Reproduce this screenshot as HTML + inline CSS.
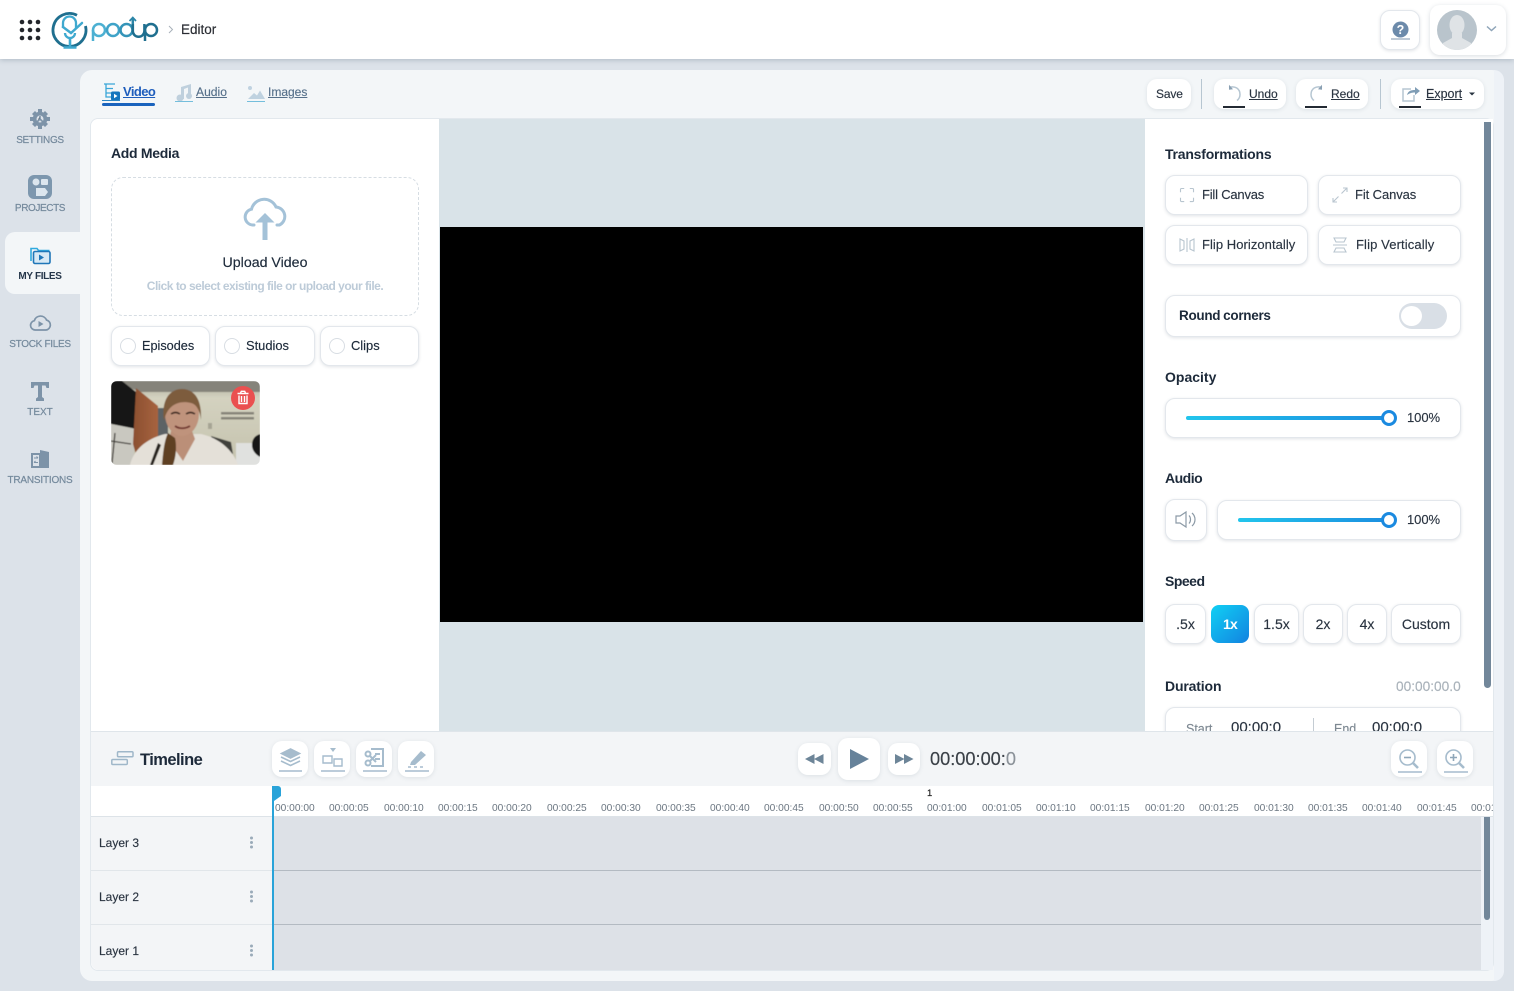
<!DOCTYPE html>
<html><head><meta charset="utf-8"><title>Podup Editor</title>
<style>
*{box-sizing:border-box}
html,body{margin:0;padding:0;width:1514px;height:991px;overflow:hidden;background:#dce2e9;font-family:"Liberation Sans",sans-serif;color:#1d2a3a}
.a{position:absolute}
.t{position:absolute;white-space:nowrap;line-height:16px;-webkit-text-stroke:.15px currentColor}
.btn{position:absolute;background:#fff;border:1px solid #e3e7ec;border-radius:10px;box-shadow:0 1px 3px rgba(60,80,100,.16)}
.sb{position:absolute;background:#fff;border-radius:10px;box-shadow:0 1px 4px rgba(60,80,100,.12)}
.side{position:absolute;left:0;width:80px;text-align:center;font-size:10px;color:#74899c;line-height:12px;-webkit-text-stroke:.2px currentColor}
svg{position:absolute;overflow:visible}
.tick{position:absolute;top:803px;font-size:10.200px;color:#6c7782;line-height:12px;white-space:nowrap}
</style></head><body>

<!-- header -->
<div class="a" style="left:0;top:0;width:1514px;height:59px;background:#fff;box-shadow:0 1px 5px rgba(90,110,130,.35)"></div>
<svg style="left:19px;top:19px" width="22" height="22" fill="#23262b"><circle cx="3" cy="3" r="2.300"/><circle cx="11" cy="3" r="2.300"/><circle cx="19" cy="3" r="2.300"/><circle cx="3" cy="11" r="2.300"/><circle cx="11" cy="11" r="2.300"/><circle cx="19" cy="11" r="2.300"/><circle cx="3" cy="19" r="2.300"/><circle cx="11" cy="19" r="2.300"/><circle cx="19" cy="19" r="2.300"/></svg>
<svg style="left:50px;top:11px" width="40" height="38" fill="none">
<path d="M35.500 15A16.500 16.500 0 1 1 27 4.300" stroke="#1f6f8f" stroke-width="2.800"/>
<path d="M13 17v-5a6.500 6.500 0 0 1 13 0v5" stroke="#3fa9cf" stroke-width="2.300"/>
<path d="M13 16l8 6 11-10" stroke="#3fa9cf" stroke-width="2.500" stroke-linecap="round"/>
<path d="M15 22a5 5 0 1 0 10 0" stroke="#3fa9cf" stroke-width="2.300"/>
<path d="M20 27v9M13.500 36.500h13" stroke="#3fa9cf" stroke-width="2.600"/></svg>
<svg style="left:90px;top:13px" width="70" height="30" fill="none" stroke-width="2.500">
<circle cx="9" cy="17" r="6" stroke="#4cb0d2"/><path d="M3 17v11" stroke="#4cb0d2"/>
<circle cx="23" cy="17" r="6" stroke="#3fa3c8"/>
<circle cx="36.500" cy="17" r="6" stroke="#3494b8"/><path d="M42.800 18V5" stroke="#2c86a8"/><path d="M39.500 8l3.300-3.500L46 8" stroke="#2c86a8" stroke-width="1.700"/>
<path d="M42.800 11v7a5.800 5.800 0 0 0 11.600 0v-7" stroke="#1f6f8f"/>
<circle cx="61" cy="17" r="6" stroke="#1f6f8f"/><path d="M55 17v11" stroke="#1f6f8f"/></svg>
<svg style="left:168px;top:25px" width="6" height="9" fill="none"><path d="M1 1l3.500 3.500L1 8" stroke="#a8b1ba"/></svg>
<div class="t" style="left:181px;top:22px;font-size:13.500px;color:#2a2d33">Editor</div>
<div class="btn" style="left:1380px;top:10px;width:40px;height:40px"></div>
<svg style="left:1392px;top:21px" width="17" height="19"><circle cx="8.500" cy="8.500" r="8" fill="#6c8aaa"/><text x="8.500" y="13" font-family="Liberation Sans" font-weight="bold" font-size="12.500" fill="#fff" text-anchor="middle">?</text><rect x="-1" y="17.500" width="19" height="1" fill="#7f96ad"/></svg>
<div class="sb" style="left:1430px;top:5px;width:76px;height:50px;box-shadow:0 1px 5px rgba(60,80,100,.2)"></div>
<svg style="left:1437px;top:10px" width="40" height="40"><defs><clipPath id="av"><circle cx="20" cy="20" r="20"/></clipPath></defs><circle cx="20" cy="20" r="20" fill="#b9c4cc"/><g clip-path="url(#av)" fill="#dfe3e6"><ellipse cx="20" cy="15" rx="7.500" ry="10"/><path d="M15 23h10v5l9 5v7H6v-7l9-5z"/></g></svg>
<svg style="left:1486px;top:25px" width="11" height="8" fill="none"><path d="M1 1.500l4.500 4 4.500-4" stroke="#8ea4b8" stroke-width="1.500"/></svg>

<!-- sidebar -->
<div class="a" style="left:5px;top:232px;width:75px;height:62px;background:#f3f6f8;border-radius:10px 0 0 10px"></div>
<svg style="left:30px;top:109px" width="20" height="20"><g fill="#7d93a8"><circle cx="10" cy="10" r="7.300"/><path d="M8 0h4v4H8zM8 16h4v4H8zM0 8h4v4H0zM16 8h4v4h-4zM2 5l3-3 3 3-3 3zM12 5l3-3 3 3-3 3zM2 15l3-3 3 3-3 3zM12 15l3-3 3 3-3 3z"/></g><circle cx="10" cy="10" r="3.500" fill="#dce2e9"/><path d="M10 7v3l-3 3M10 10l3 3" stroke="#7d93a8" stroke-width="1.600"/></svg>
<div class="side" style="top:135px;letter-spacing:-.3px">SETTINGS</div>
<svg style="left:28px;top:175px" width="24" height="24"><rect width="24" height="24" rx="6" fill="#7d97ae"/><circle cx="8" cy="7" r="3.500" fill="#dce6ee"/><path d="M8 13h9l3 4-3 4H8z" fill="#dce6ee"/><rect x="13" y="4" width="7" height="6" rx="1" fill="#dce6ee"/></svg>
<div class="side" style="top:203px;letter-spacing:-.4px">PROJECTS</div>
<svg style="left:30px;top:246px" width="21" height="18" fill="none"><path d="M1 15V2.500h6l1.500 2h11" stroke="#30a9de" stroke-width="1.600"/><rect x="3.500" y="5.500" width="16.500" height="12" rx="1.500" fill="#d7e9f5" stroke="#1f76b8" stroke-width="1.600"/><path d="M9 8.500v6l5-3z" fill="#1f76b8"/></svg>
<div class="side" style="top:271px;color:#25364a;font-weight:bold;letter-spacing:-.35px;-webkit-text-stroke:0">MY FILES</div>
<svg style="left:29px;top:315px" width="23" height="16" fill="none"><path d="M6 15a4.700 4.700 0 0 1-.7-9.300A6.500 6.500 0 0 1 17.500 5a5.100 5.100 0 0 1-.5 10z" stroke="#7d93a8" stroke-width="1.700"/><path d="M9.500 6v6l5-3z" fill="#7d93a8"/></svg>
<div class="side" style="top:339px;letter-spacing:-.3px">STOCK FILES</div>
<svg style="left:31px;top:382px" width="18" height="19" fill="#7d93a8"><path d="M0 0h18v6h-2.500l-1-2.500H11V15l2 1.500V19H5v-2.500L7 15V3.500H3.500l-1 2.500H0z"/></svg>
<div class="side" style="top:407px">TEXT</div>
<svg style="left:31px;top:450px" width="18" height="18"><path d="M0 3h9V0l9 2v16H0z" fill="#7d93a8"/><path d="M2 5h6v11H2z" fill="#dce2e9"/><path d="M3 8h4M7 8L5.500 6.500M3 12.500h4M3 12.500L4.500 11" stroke="#7d93a8" fill="none"/></svg>
<div class="side" style="top:475px;letter-spacing:-.2px">TRANSITIONS</div>

<!-- main -->
<div class="a" style="left:80px;top:70px;width:1424px;height:911px;background:#f3f6f8;border-radius:12px"></div>
<div class="a" style="left:1494px;top:70px;width:10px;height:911px;background:#eef2f7;border-radius:0 12px 12px 0"></div>

<!-- tabs -->
<svg style="left:102px;top:83px" width="18" height="18" fill="none"><path d="M2 1h11M4 1v13h5M4 5.500h7M4 10h5" stroke="#3aa6d8" stroke-width="1.300"/><rect x="9" y="8.500" width="9" height="9" rx="1.500" fill="#1675bd"/><path d="M12 10.800v4.400l3.500-2.200z" fill="#fff"/></svg>
<div class="a" style="left:102px;top:100px;width:18px;height:1px;background:#2d86c5"></div>
<div class="t" style="left:123px;top:84px;font-size:13px;font-weight:bold;color:#1e5dbc;text-decoration:underline;letter-spacing:-.6px;-webkit-text-stroke:0">Video</div>
<div class="a" style="left:102px;top:103px;width:53px;height:3px;border-radius:2px;background:#1a63bd"></div>
<svg style="left:176px;top:84px" width="17" height="17" fill="#bfd0dd"><path d="M5 3l10-3v13h-3V3.500L8 5v10H5z"/><circle cx="4" cy="14" r="3.500"/><circle cx="13" cy="12" r="3"/></svg>
<div class="a" style="left:175px;top:101px;width:18px;height:1px;background:#74bedc"></div>
<div class="t" style="left:196px;top:84px;font-size:12.100px;color:#56708a;text-decoration:underline">Audio</div>
<svg style="left:247px;top:85px" width="18" height="15" fill="#bfd2e0"><circle cx="3" cy="3" r="2"/><path d="M1 14l6-6 3 2.500 3-5 5 8.500z"/></svg>
<div class="a" style="left:247px;top:101px;width:18px;height:1px;background:#74bedc"></div>
<div class="t" style="left:268px;top:84px;font-size:12px;color:#56708a;text-decoration:underline">Images</div>

<!-- toolbar -->
<div class="sb" style="left:1147px;top:79px;width:44px;height:30px"></div>
<div class="t" style="left:1156px;top:86px;font-size:12px;color:#2a3441;letter-spacing:-.15px">Save</div>
<div class="a" style="left:1201px;top:79px;width:1px;height:30px;background:#b7c6d1"></div>
<div class="sb" style="left:1214px;top:79px;width:72px;height:30px"></div>
<svg style="left:1226px;top:84px" width="17" height="20" fill="none"><path d="M3 3.500c6-2 11 1 11 7 0 2.500-1 4.500-3 6" stroke="#b6c6d2" stroke-width="1.500"/><path d="M3 .8v5l4-.5z" fill="#8aa0b3"/></svg>
<div class="a" style="left:1223px;top:106px;width:22px;height:2px;background:#232a33"></div>
<div class="t" style="left:1249px;top:86px;font-size:12px;color:#2a3441;text-decoration:underline">Undo</div>
<div class="sb" style="left:1296px;top:79px;width:72px;height:30px"></div>
<svg style="left:1308px;top:84px" width="17" height="20" fill="none"><path d="M14 3.500c-6-2-11 1-11 7 0 2.500 1 4.500 3 6" stroke="#b6c6d2" stroke-width="1.500"/><path d="M14 .8v5l-4-.5z" fill="#8aa0b3"/></svg>
<div class="a" style="left:1305px;top:106px;width:22px;height:2px;background:#232a33"></div>
<div class="t" style="left:1331px;top:86px;font-size:12px;color:#2a3441;text-decoration:underline">Redo</div>
<div class="a" style="left:1380px;top:79px;width:1px;height:30px;background:#b7c6d1"></div>
<div class="sb" style="left:1391px;top:79px;width:93px;height:30px"></div>
<svg style="left:1402px;top:85px" width="18" height="17" fill="none"><path d="M9 4H1v12h11v-6" stroke="#b6c6d2" stroke-width="1.500"/><path d="M5 10c1-4 4-5 8-5V2l5 4-5 4V7.500c-3 0-5 .5-8 2.500z" fill="#7f9db5"/></svg>
<div class="a" style="left:1399px;top:106px;width:22px;height:2px;background:#232a33"></div>
<div class="t" style="left:1426px;top:86px;font-size:12.500px;color:#2a3441;text-decoration:underline">Export</div>
<svg style="left:1469px;top:92px" width="6" height="4" fill="#2a3441"><path d="M0 .5h6L3 3.500z"/></svg>

<!-- frame -->
<div class="a" style="left:90px;top:118px;width:1404px;height:853px;border:1px solid #e2e8ed;border-radius:8px;background:#fff;overflow:hidden"></div>
<div class="a" style="left:91px;top:119px;width:348px;height:612px;background:#fff;border-radius:8px 0 0 0"></div>
<div class="a" style="left:439px;top:119px;width:706px;height:612px;background:#d9e3e8"></div>
<div class="a" style="left:440px;top:227px;width:703px;height:395px;background:#000"></div>
<div class="a" style="left:1145px;top:119px;width:348px;height:612px;background:#fff;overflow:hidden"></div>

<!-- left panel -->
<div class="t" style="left:111px;top:145px;font-size:14px;font-weight:bold;color:#1d2a3a;letter-spacing:-.3px;-webkit-text-stroke:0">Add Media</div>
<div class="a" style="left:111px;top:177px;width:308px;height:139px;border:1px dashed #d6dde3;border-radius:12px"></div>
<svg style="left:243px;top:199px" width="45" height="43" fill="none"><path d="M11 26H9.500a8 8 0 0 1-1-15.800A13 13 0 0 1 33 8a9.500 9.500 0 0 1 3.500 18H34" stroke="#a4c2d8" stroke-width="3" stroke-linecap="round"/><path d="M22 14l-9.500 9.500h7V41h5V23.500h7z" fill="#a4c2d8"/></svg>
<div class="t" style="left:111px;top:255px;width:308px;text-align:center;font-size:14.200px;color:#1d2a3a">Upload Video</div>
<div class="t" style="left:111px;top:278px;width:308px;text-align:center;font-size:12px;font-weight:bold;color:#bdcbd8;letter-spacing:-.5px;-webkit-text-stroke:0">Click to select existing file or upload your file.</div>
<div class="btn" style="left:111px;top:326px;width:99px;height:40px"></div>
<div class="btn" style="left:215px;top:326px;width:100px;height:40px"></div>
<div class="btn" style="left:320px;top:326px;width:99px;height:40px"></div>
<div class="a" style="left:120px;top:338px;width:16px;height:16px;border:1px solid #d8dde3;border-radius:50%"></div>
<div class="a" style="left:224px;top:338px;width:16px;height:16px;border:1px solid #d8dde3;border-radius:50%"></div>
<div class="a" style="left:329px;top:338px;width:16px;height:16px;border:1px solid #d8dde3;border-radius:50%"></div>
<div class="t" style="left:142px;top:338px;font-size:12.700px;color:#1d2a3a">Episodes</div>
<div class="t" style="left:246px;top:338px;font-size:12.900px;color:#1d2a3a">Studios</div>
<div class="t" style="left:351px;top:338px;font-size:12.900px;color:#1d2a3a">Clips</div>

<!-- thumbnail -->
<svg style="left:111px;top:381px;overflow:hidden;border-radius:6px" width="149" height="84">
<defs><filter id="bl" x="0" y="0" width="100%" height="100%"><feGaussianBlur stdDeviation=".6"/></filter>
<linearGradient id="wall" x1="0" y1="0" x2="0" y2="1"><stop offset="0" stop-color="#aaa89b"/><stop offset=".2" stop-color="#d4d2c0"/><stop offset="1" stop-color="#c4c2ad"/></linearGradient>
<linearGradient id="door" x1="0" y1="0" x2="1" y2="0"><stop offset="0" stop-color="#8b4f30"/><stop offset="1" stop-color="#a7633f"/></linearGradient></defs>
<g filter="url(#bl)">
<rect width="149" height="84" fill="url(#wall)"/>
<path d="M0 0h149v11H30z" fill="#85837a"/>
<path d="M0 0h11l14 11v37L0 43z" fill="#141417"/>
<path d="M0 43l25 5-3 36H0z" fill="#c9c8c0"/>
<path d="M4 52l-3 30M0 60l20 3" stroke="#3b3833" stroke-width="1.300"/>
<path d="M25 7l22 18v38l-21 14-4-14z" fill="url(#door)"/>
<path d="M47 27h10v34H47z" fill="#5c6265"/>
<g fill="#55524c"><rect x="110" y="31" width="33" height="2.500" opacity=".6"/><rect x="110" y="36" width="33" height="2.500" opacity=".6"/></g>
<rect x="97" y="42" width="4" height="6" fill="#a6a494"/>
<path d="M100 55l20 6 2 12-18-8z" fill="#3f3f3b"/>
<path d="M125 62h24v22h-24z" fill="#e0e1df"/>
<path d="M19 84c3-14 15-26 35-31h36c18 4 32 16 37 31z" fill="#e4e0d8"/>
<path d="M60 50h21l3 8-12 22-14-20z" fill="#bb8f78"/>
<path d="M47 62l-8 22h3l8-20z" fill="#26211e"/>
<ellipse cx="71" cy="33" rx="17" ry="22" fill="#bf937c"/>
<path d="M53 40c-3-20 5-32 18-32 14 0 20 13 19 31-1-10-5-16-10-17-12-3-24 2-27 18z" fill="#7d5c3d"/>
<path d="M57 52c-4 8-5 21-6 32h11c3-8 4-19 2-27z" fill="#5f4024"/>
<path d="M60 33c3-2 6-2 9 0M75 33c3-2 6-2 9 0" stroke="#3a261e" stroke-width="1.600" fill="none"/>
<path d="M64 45c4 3 10 3 15 0" stroke="#6f352e" stroke-width="1.800" fill="none"/>
<path d="M149 53c-6 2-8 6-8 11s3 9 8 12z" fill="#141417"/>
</g>
<circle cx="132" cy="17" r="12" fill="#ea5050"/>
<path d="M126.500 12.500h11M129.500 12.300l.8-2h3.400l.8 2M128 14.500v8h8v-8M130.500 15v6M133.500 15v6" stroke="#fff" stroke-width="1.400" fill="none"/>
</svg>

<!-- right panel -->
<div class="t" style="left:1165px;top:146px;font-size:14px;font-weight:bold;color:#1d2a3a;letter-spacing:-.22px;-webkit-text-stroke:0">Transformations</div>
<div class="btn" style="left:1165px;top:175px;width:143px;height:40px"></div>
<div class="btn" style="left:1318px;top:175px;width:143px;height:40px"></div>
<div class="btn" style="left:1165px;top:225px;width:143px;height:40px"></div>
<div class="btn" style="left:1318px;top:225px;width:143px;height:40px"></div>
<svg style="left:1180px;top:188px" width="14" height="14" fill="none" stroke="#b8c5cf" stroke-width="1.200"><path d="M0 4V1a1 1 0 0 1 1-1h3M10 0h3a1 1 0 0 1 1 1v3M14 10v3a1 1 0 0 1-1 1h-3M4 14H1a1 1 0 0 1-1-1v-3" transform="translate(.5 .5) scale(.93)"/></svg>
<svg style="left:1333px;top:188px" width="14" height="14" fill="none" stroke="#b8c5cf" stroke-width="1.100"><path d="M8.500 5.500L14 0M10 0h4v4M5.500 8.500L0 14M0 10v4h4"/></svg>
<svg style="left:1180px;top:238px" width="14" height="14" fill="none" stroke="#b8c5cf" stroke-width="1.100"><path d="M0 1l4 2v8l-4 2zM14 1l-4 2v8l4 2zM7 0v14"/></svg>
<svg style="left:1333px;top:238px" width="14" height="14" fill="none" stroke="#b8c5cf" stroke-width="1.100"><path d="M1 0l2 4h8l2-4zM1 14l2-4h8l2 4zM0 7h14"/></svg>
<div class="t" style="left:1202px;top:187px;font-size:13px;color:#2a3441;letter-spacing:-.2px">Fill Canvas</div>
<div class="t" style="left:1355px;top:187px;font-size:13px;color:#2a3441;letter-spacing:-.1px">Fit Canvas</div>
<div class="t" style="left:1202px;top:237px;font-size:13px;color:#2a3441;letter-spacing:.05px">Flip Horizontally</div>
<div class="t" style="left:1356px;top:237px;font-size:13px;color:#2a3441;letter-spacing:.12px">Flip Vertically</div>
<div class="btn" style="left:1165px;top:295px;width:296px;height:42px"></div>
<div class="t" style="left:1179px;top:308px;font-size:14px;font-weight:bold;color:#1d2a3a;letter-spacing:-.3px;word-spacing:-.5px;font-size:13.500px;-webkit-text-stroke:0">Round corners</div>
<div class="a" style="left:1399px;top:303px;width:48px;height:26px;border-radius:13px;background:#d9dfe6"></div>
<div class="a" style="left:1401px;top:306px;width:21px;height:20px;border-radius:50%;background:#fff"></div>

<div class="t" style="left:1165px;top:369px;font-size:14px;font-weight:bold;color:#1d2a3a;letter-spacing:0;-webkit-text-stroke:0">Opacity</div>
<div class="btn" style="left:1165px;top:398px;width:296px;height:40px"></div>
<div class="a" style="left:1186px;top:416px;width:200px;height:4px;border-radius:2px;background:linear-gradient(90deg,#22c5ec,#1b8fe0)"></div>
<div class="a" style="left:1381px;top:410px;width:16px;height:16px;border-radius:50%;background:#fff;border:3px solid #1b8ae0"></div>
<div class="t" style="left:1407px;top:410px;font-size:13px;color:#2a3441;letter-spacing:-.05px">100%</div>

<div class="t" style="left:1165px;top:470px;font-size:14px;font-weight:bold;color:#1d2a3a;letter-spacing:-.5px;-webkit-text-stroke:0">Audio</div>
<div class="btn" style="left:1165px;top:499px;width:42px;height:42px"></div>
<svg style="left:1175px;top:511px" width="22" height="17" fill="none" stroke="#8c9aa6" stroke-width="1.200"><path d="M1 5h4l6-4v15l-6-4H1zM14 4.500c2 2 2 6 0 8M17 2c4 3.500 4 9.500 0 13"/></svg>
<div class="btn" style="left:1217px;top:500px;width:244px;height:40px"></div>
<div class="a" style="left:1238px;top:518px;width:148px;height:4px;border-radius:2px;background:linear-gradient(90deg,#22c5ec,#1b8fe0)"></div>
<div class="a" style="left:1381px;top:512px;width:16px;height:16px;border-radius:50%;background:#fff;border:3px solid #1b8ae0"></div>
<div class="t" style="left:1407px;top:512px;font-size:13px;color:#2a3441;letter-spacing:-.05px">100%</div>

<div class="t" style="left:1165px;top:573px;font-size:14px;font-weight:bold;color:#1d2a3a;letter-spacing:-.5px;-webkit-text-stroke:0">Speed</div>
<div class="btn" style="left:1165px;top:604px;width:41px;height:40px"></div>
<div class="a" style="left:1211px;top:605px;width:38px;height:38px;border-radius:8px;background:linear-gradient(135deg,#10d0f4,#1382e0)"></div>
<div class="btn" style="left:1254px;top:604px;width:45px;height:40px"></div>
<div class="btn" style="left:1303px;top:604px;width:40px;height:40px"></div>
<div class="btn" style="left:1347px;top:604px;width:40px;height:40px"></div>
<div class="btn" style="left:1391px;top:604px;width:70px;height:40px"></div>
<div class="t" style="left:1165px;width:41px;top:616px;text-align:center;font-size:14px;color:#2a3441">.5x</div>
<div class="t" style="left:1211px;width:38px;top:616px;text-align:center;font-size:14px;font-weight:bold;color:#fff;letter-spacing:-.8px;-webkit-text-stroke:0">1x</div>
<div class="t" style="left:1254px;width:45px;top:616px;text-align:center;font-size:14px;color:#2a3441">1.5x</div>
<div class="t" style="left:1303px;width:40px;top:616px;text-align:center;font-size:14px;color:#2a3441">2x</div>
<div class="t" style="left:1347px;width:40px;top:616px;text-align:center;font-size:14px;color:#2a3441">4x</div>
<div class="t" style="left:1391px;width:70px;top:616px;text-align:center;font-size:14px;color:#2a3441">Custom</div>

<div class="t" style="left:1165px;top:678px;font-size:14px;font-weight:bold;color:#1d2a3a;letter-spacing:-.15px;-webkit-text-stroke:0">Duration</div>
<div class="t" style="left:1396px;top:679px;font-size:13.700px;color:#a9b2ba">00:00:00.0</div>
<div class="btn" style="left:1165px;top:707px;width:296px;height:40px"></div>
<div class="t" style="left:1186px;top:721px;font-size:12.500px;color:#7d8892">Start</div>
<div class="t" style="left:1231px;top:720px;font-size:15px;color:#2a3441">00:00:0</div>
<div class="a" style="left:1313px;top:718px;width:1px;height:14px;background:#c4ccd3"></div>
<div class="t" style="left:1334px;top:721px;font-size:12.500px;color:#7d8892">End</div>
<div class="t" style="left:1372px;top:720px;font-size:15px;color:#2a3441">00:00:0</div>
<div class="a" style="left:1484px;top:122px;width:7px;height:566px;border-radius:0 0 4px 4px;background:#72879a"></div>

<!-- timeline head -->
<div class="a" style="left:91px;top:731px;width:1402px;height:55px;background:#f3f5f7;border-top:1px solid #dfe5ea"></div>
<svg style="left:111px;top:751px" width="23" height="15" fill="none" stroke="#9fb7c9" stroke-width="1.500"><rect x="6.500" y=".8" width="15.500" height="5" rx="1"/><rect x=".8" y="8.500" width="15.500" height="5" rx="1"/></svg>
<div class="t" style="left:140px;top:752px;font-size:16.500px;font-weight:bold;color:#1d2a3a;letter-spacing:-.55px;-webkit-text-stroke:0">Timeline</div>
<div class="sb" style="left:272px;top:741px;width:36px;height:36px"></div>
<div class="sb" style="left:314px;top:741px;width:36px;height:36px"></div>
<div class="sb" style="left:356px;top:741px;width:36px;height:36px"></div>
<div class="sb" style="left:398px;top:741px;width:36px;height:36px"></div>
<svg style="left:279px;top:748px" width="23" height="24" fill="none" stroke="#a6bccd" stroke-width="1.600"><path d="M11.500 1l9 4.500-9 4.500-9-4.500z" fill="#a6bccd"/><path d="M2 9l9.500 4.500L21 9M2 13l9.500 4.500L21 13"/><path d="M0 23h23" stroke-width="1.400"/></svg>
<svg style="left:321px;top:748px" width="24" height="24" fill="none" stroke="#a6bccd" stroke-width="1.400"><path d="M9 0h6l-3 4z" fill="#a6bccd" stroke="none"/><path d="M2 8h9v7H2zM13 11h8v7h-8z"/><path d="M0 23h24" stroke-width="1.400"/></svg>
<svg style="left:363px;top:748px" width="24" height="24" fill="none" stroke="#a6bccd" stroke-width="2"><path d="M8 1h12v17H8M12 6h5M12 11h5"/><circle cx="5" cy="6" r="2.500"/><circle cx="5" cy="15" r="2.500"/><path d="M7 8l6 6M7 13l6-6"/><path d="M0 23h24" stroke-width="1.400"/></svg>
<svg style="left:405px;top:748px" width="24" height="24" fill="none" stroke="#a6bccd" stroke-width="1.400"><path d="M6 14L16 3l5 4-11 10H5z" fill="#a6bccd" stroke="none"/><path d="M3 19h3M9 19h3M15 19h3M0 23h24"/></svg>

<div class="sb" style="left:798px;top:743px;width:33px;height:32px"></div>
<div class="sb" style="left:838px;top:738px;width:42px;height:42px"></div>
<div class="sb" style="left:888px;top:743px;width:32px;height:32px"></div>
<svg style="left:805px;top:754px" width="19" height="10" fill="#6d8598"><path d="M9.500 0v10L0 5zM18.500 0v10L9 5z"/></svg>
<svg style="left:850px;top:749px" width="19" height="20" fill="#66829a"><path d="M0 0l19 10L0 20z"/></svg>
<svg style="left:895px;top:754px" width="19" height="10" fill="#6d8598"><path d="M0 0v10l9.500-5zM9 0v10l9.500-5z"/></svg>
<div class="t" style="left:930px;top:751px;font-size:18.200px;color:#3a4047">00:00:00:<span style="color:#8b9299">0</span></div>

<div class="sb" style="left:1391px;top:741px;width:36px;height:36px"></div>
<div class="sb" style="left:1437px;top:741px;width:36px;height:36px"></div>
<svg style="left:1398px;top:749px" width="24" height="24" fill="none" stroke="#a6bccd" stroke-width="1.600"><circle cx="9.500" cy="8.500" r="7.500"/><path d="M6 8.500h7" stroke="#8fa7b9"/><path d="M15 14l5 5" stroke-width="2.600"/><path d="M0 23h24" stroke-width="1.400"/></svg>
<svg style="left:1444px;top:749px" width="24" height="24" fill="none" stroke="#a6bccd" stroke-width="1.600"><circle cx="9.500" cy="8.500" r="7.500"/><path d="M6 8.500h7M9.500 5v7" stroke="#8fa7b9"/><path d="M15 14l5 5" stroke-width="2.600"/><path d="M0 23h24" stroke-width="1.400"/></svg>

<!-- ruler -->
<div class="a" style="left:91px;top:786px;width:1402px;height:30px;background:#fff;overflow:hidden"></div>
<div class="a" style="left:91px;top:816px;width:1402px;height:1px;background:#dde3e8"></div>
<div class="t" style="left:927px;top:787px;font-size:9.500px;color:#222;line-height:14px">1</div>
<div class="tick" style="left:275px">00:00:00</div>
<div class="tick" style="left:329px">00:00:05</div>
<div class="tick" style="left:384px">00:00:10</div>
<div class="tick" style="left:438px">00:00:15</div>
<div class="tick" style="left:492px">00:00:20</div>
<div class="tick" style="left:547px">00:00:25</div>
<div class="tick" style="left:601px">00:00:30</div>
<div class="tick" style="left:656px">00:00:35</div>
<div class="tick" style="left:710px">00:00:40</div>
<div class="tick" style="left:764px">00:00:45</div>
<div class="tick" style="left:819px">00:00:50</div>
<div class="tick" style="left:873px">00:00:55</div>
<div class="tick" style="left:927px">00:01:00</div>
<div class="tick" style="left:982px">00:01:05</div>
<div class="tick" style="left:1036px">00:01:10</div>
<div class="tick" style="left:1090px">00:01:15</div>
<div class="tick" style="left:1145px">00:01:20</div>
<div class="tick" style="left:1199px">00:01:25</div>
<div class="tick" style="left:1254px">00:01:30</div>
<div class="tick" style="left:1308px">00:01:35</div>
<div class="tick" style="left:1362px">00:01:40</div>
<div class="tick" style="left:1417px">00:01:45</div>
<div class="tick" style="left:1471px;width:22px;overflow:hidden">00:01:50</div>

<!-- layers -->
<div class="a" style="left:91px;top:817px;width:181px;height:153px;background:#f3f5f7;border-radius:0 0 0 8px"></div>
<div class="a" style="left:91px;top:870px;width:181px;height:1px;background:#e1e6ea"></div>
<div class="a" style="left:91px;top:924px;width:181px;height:1px;background:#e1e6ea"></div>
<div class="a" style="left:274px;top:817px;width:1207px;height:153px;background:#dde1e7"></div>
<div class="a" style="left:274px;top:870px;width:1207px;height:1px;background:#b3bac2"></div>
<div class="a" style="left:274px;top:924px;width:1207px;height:1px;background:#b3bac2"></div>
<div class="a" style="left:1481px;top:817px;width:12px;height:153px;background:#eef2f7"></div>
<div class="a" style="left:1484px;top:817px;width:6px;height:103px;border-radius:0 0 3px 3px;background:#72879a"></div>
<div class="t" style="left:99px;top:835px;font-size:12px;color:#2a3441">Layer 3</div>
<div class="t" style="left:99px;top:889px;font-size:12px;color:#2a3441">Layer 2</div>
<div class="t" style="left:99px;top:943px;font-size:12px;color:#2a3441">Layer 1</div>
<svg style="left:249px;top:836px" width="5" height="13" fill="#9aabb9"><circle cx="2.500" cy="2" r="1.500"/><circle cx="2.500" cy="6.500" r="1.500"/><circle cx="2.500" cy="11" r="1.500"/></svg>
<svg style="left:249px;top:890px" width="5" height="13" fill="#9aabb9"><circle cx="2.500" cy="2" r="1.500"/><circle cx="2.500" cy="6.500" r="1.500"/><circle cx="2.500" cy="11" r="1.500"/></svg>
<svg style="left:249px;top:944px" width="5" height="13" fill="#9aabb9"><circle cx="2.500" cy="2" r="1.500"/><circle cx="2.500" cy="6.500" r="1.500"/><circle cx="2.500" cy="11" r="1.500"/></svg>
<div class="a" style="left:272px;top:800px;width:2px;height:170px;background:#29a3d9"></div>
<svg style="left:272px;top:786px" width="9" height="15" fill="#29a3d9"><path d="M0 0h6a3 3 0 0 1 3 3v7l-7 5H0z"/></svg>
</body></html>
